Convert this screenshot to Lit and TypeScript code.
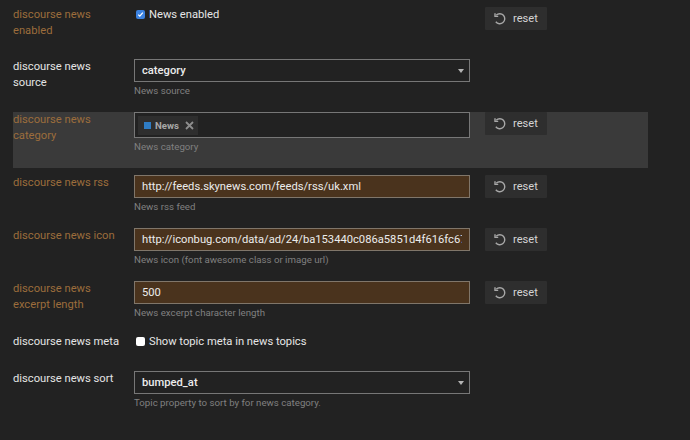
import { LitElement, css, html, nothing } from 'lit';
import { customElement } from 'lit/decorators.js';

type Setting = {
  label: string;
  kind: 'check' | 'select' | 'tags' | 'text';
  value?: string;
  help?: string;
  checked?: boolean;
  overridden?: boolean;
  reset?: boolean;
  cls: string;
};

const SETTINGS: Setting[] = [
  { label: 'discourse news enabled', kind: 'check', value: 'News enabled', checked: true, overridden: true, reset: true, cls: 'r-enabled' },
  { label: 'discourse news source', kind: 'select', value: 'category', help: 'News source', cls: 'r-std' },
  { label: 'discourse news category', kind: 'tags', value: 'News', help: 'News category', overridden: true, reset: true, cls: 'r-category' },
  { label: 'discourse news rss', kind: 'text', value: 'http://feeds.skynews.com/feeds/rss/uk.xml', help: 'News rss feed', overridden: true, reset: true, cls: 'r-std' },
  { label: 'discourse news icon', kind: 'text', value: 'http://iconbug.com/data/ad/24/ba153440c086a5851d4f616fc67e1c2d.png', help: 'News icon (font awesome class or image url)', overridden: true, reset: true, cls: 'r-std' },
  { label: 'discourse news excerpt length', kind: 'text', value: '500', help: 'News excerpt character length', overridden: true, reset: true, cls: 'r-std' },
  { label: 'discourse news meta', kind: 'check', value: 'Show topic meta in news topics', checked: false, cls: 'r-meta' },
  { label: 'discourse news sort', kind: 'select', value: 'bumped_at', help: 'Topic property to sort by for news category.', cls: 'r-std' },
];

@customElement('app-root')
export class AppRoot extends LitElement {
  static styles = css`
    :host {
      display: block;
      width: 690px;
      height: 440px;
      overflow: hidden;
      background: #222222;
      color: #dddddd;
      font-family: Roboto, 'Liberation Sans', sans-serif;
      font-size: 11.2px;
    }
    .list {
      display: flex;
      flex-direction: column;
      width: 635px;
      margin-left: 13px;
      padding-top: 7px;
    }
    .row {
      display: flex;
      align-items: flex-start;
      box-sizing: border-box;
    }
    .r-enabled { height: 52px; }
    .r-std { height: 53px; }
    .r-category { height: 56px; margin-bottom: 7px; background: #3a3a3a; }
    .r-meta { height: 37px; }
    .label {
      box-sizing: border-box;
      width: 121px;
      padding-right: 11px;
      line-height: 16px;
      color: #e4e4e4;
    }
    .overridden .label { color: #9c6d3c; }
    .control { width: 336px; flex: none; }
    .box {
      display: flex;
      align-items: center;
      box-sizing: border-box;
      width: 336px;
      height: 23px;
      padding: 0 7px;
      border: 1px solid #777777;
      background: #222222;
      color: #ececec;
      font: inherit;
      outline: none;
    }
    .box.override { background: #4a331d; border-color: #80766a; }
    .box.select { font-weight: 500; justify-content: space-between; padding-right: 5px; }
    .box.tags { height: 26px; padding: 2px 3px; }
    .caret {
      width: 0;
      height: 0;
      border-left: 3.5px solid transparent;
      border-right: 3.5px solid transparent;
      border-top: 4px solid #b4b4b4;
    }
    .tag {
      display: flex;
      align-items: center;
      gap: 4px;
      height: 19px;
      padding: 0 4px 0 6px;
      background: #2e2e2e;
      color: #a8a8a8;
      font-size: 9.6px;
      font-weight: 700;
    }
    .swatch { width: 7px; height: 7px; background: #2f7cc4; }
    .tag svg { margin-left: 2px; }
    .help {
      margin-top: 2px;
      line-height: 14px;
      font-size: 9.7px;
      color: #808080;
    }
    .check {
      display: flex;
      align-items: center;
      gap: 4px;
      height: 15px;
      color: #e6e6e6;
    }
    .tick {
      display: flex;
      align-items: center;
      justify-content: center;
      box-sizing: border-box;
      width: 9px;
      height: 9px;
      margin-left: 2px;
      border-radius: 2px;
      background: #ffffff;
    }
    .tick.on { background: #3b82e0; }
    .reset {
      display: flex;
      align-items: center;
      gap: 6px;
      box-sizing: border-box;
      width: 62px;
      height: 23px;
      margin-left: 15px;
      padding: 0 0 0 9px;
      border: 0;
      border-radius: 1px;
      background: #2e2e2e;
      color: #d4d4d4;
      font: inherit;
      font-size: 11.1px;
    }
  `;

  private renderControl(s: Setting) {
    if (s.kind === 'check') {
      return html`<div class="check">
        <span class="tick ${s.checked ? 'on' : ''}">
          ${s.checked
            ? html`<svg width="7" height="7" viewBox="0 0 7 7"><path d="M1.2 3.6 L2.8 5.2 L5.8 1.6" fill="none" stroke="#fff" stroke-width="1.2"/></svg>`
            : nothing}
        </span>
        ${s.value}
      </div>`;
    }
    if (s.kind === 'select') {
      return html`<div class="box select">${s.value}<span class="caret"></span></div>`;
    }
    if (s.kind === 'tags') {
      return html`<div class="box tags">
        <span class="tag">
          <span class="swatch"></span>${s.value}
          <svg width="9" height="9" viewBox="0 0 9 9"><path d="M1 1 L8 8 M8 1 L1 8" stroke="#8e8e8e" stroke-width="1.8"/></svg>
        </span>
      </div>`;
    }
    return html`<input class="box override" .value=${s.value ?? ''} />`;
  }

  private renderRow(s: Setting) {
    return html`<div class="row ${s.cls} ${s.overridden ? 'overridden' : ''}">
      <div class="label">${s.label}</div>
      <div class="control">
        ${this.renderControl(s)}
        ${s.help ? html`<div class="help">${s.help}</div>` : nothing}
      </div>
      ${s.reset
        ? html`<button class="reset">
            <svg width="13" height="14" viewBox="0 0 13 14" fill="none" stroke="#a8a8a8" stroke-width="1.4">
              <path d="M2.2 3.2 A5 5 0 1 1 1.8 9.8" />
              <path d="M1 1.2 V4.4 H4.2" />
            </svg>
            reset
          </button>`
        : nothing}
    </div>`;
  }

  render() {
    return html`<div class="list">${SETTINGS.map((s) => this.renderRow(s))}</div>`;
  }
}
